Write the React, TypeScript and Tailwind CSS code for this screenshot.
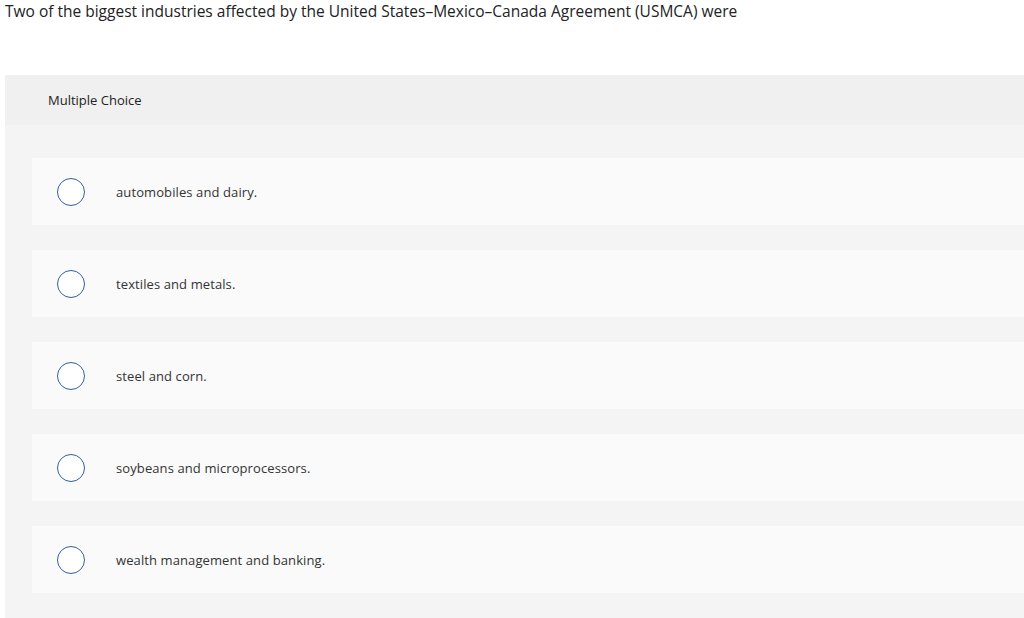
const options = [
  "automobiles and dairy.",
  "textiles and metals.",
  "steel and corn.",
  "soybeans and microprocessors.",
  "wealth management and banking.",
];

const App = () => {
  return (
    <div
      className="w-[1024px] h-[618px] bg-white overflow-hidden text-[#222]"
      style={{ fontFamily: "'Open Sans', 'Liberation Sans', sans-serif" }}
    >
      <p className="pl-[5px] h-[75px] text-[15.5px] leading-[22px]">
        Two of the biggest industries affected by the United States–Mexico–Canada Agreement (USMCA) were
      </p>
      <div className="ml-[5px] bg-[#f4f4f4] h-[543px]">
        <div className="h-[50px] bg-[#f0f0f0] flex items-center pl-[43px] pt-[2px] text-[13px]">
          Multiple Choice
        </div>
        <div className="flex flex-col gap-[25px] pt-[33px] pl-[27px]">
          {options.map((opt) => (
            <label
              key={opt}
              className="h-[67px] bg-[#fafafa] flex items-center"
            >
              <span className="ml-[25px] w-[28px] h-[28px] rounded-full border border-[#2f5f9e] bg-white" />
              <span className="ml-[31px] pt-[2px] text-[13px] tracking-[0.1px] text-[#333]">{opt}</span>
            </label>
          ))}
        </div>
      </div>
    </div>
  );
};

export default App;
